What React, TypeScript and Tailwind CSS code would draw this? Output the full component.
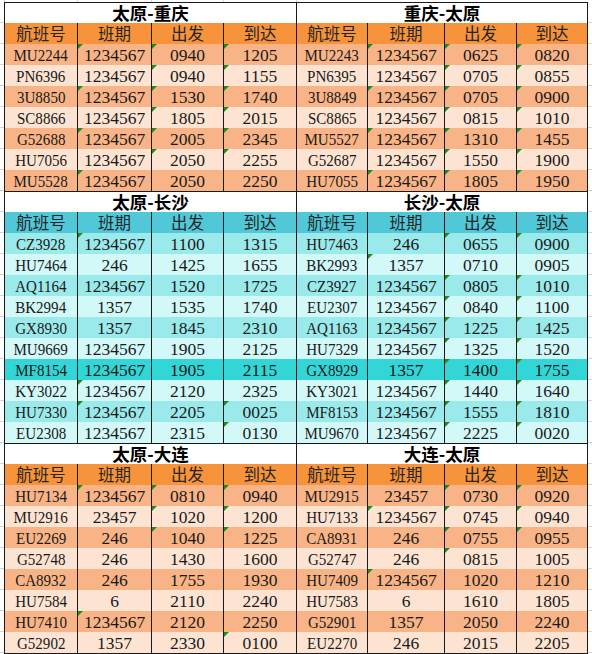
import React from "react";

type Row = { f: string; p: string; d: string; a: string; hl?: boolean; t?: string };
type Section = {
  theme: "o" | "c";
  leftTitle: string;
  rightTitle: string;
  left: Row[];
  right: Row[];
};

const r = (f: string, p: string, d: string, a: string, t = "0000", hl = false): Row => ({ f, p, d, a, t, hl });

const sections: Section[] = [
  {
    theme: "o",
    leftTitle: "太原-重庆",
    rightTitle: "重庆-太原",
    left: [
      r("MU2244", "1234567", "0940", "1205", "0111"),
      r("PN6396", "1234567", "0940", "1155", "0011"),
      r("3U8850", "1234567", "1530", "1740", "0111"),
      r("SC8866", "1234567", "1805", "2015", "0011"),
      r("G52688", "1234567", "2005", "2345", "0111"),
      r("HU7056", "1234567", "2050", "2255", "0011"),
      r("MU5528", "1234567", "2050", "2250", "0100"),
    ],
    right: [
      r("MU2243", "1234567", "0625", "0820", "0111"),
      r("PN6395", "1234567", "0705", "0855", "0011"),
      r("3U8849", "1234567", "0705", "0900", "0111"),
      r("SC8865", "1234567", "0815", "1010", "0011"),
      r("MU5527", "1234567", "1310", "1455", "0111"),
      r("G52687", "1234567", "1550", "1900", "0011"),
      r("HU7055", "1234567", "1805", "1950", "0111"),
    ],
  },
  {
    theme: "c",
    leftTitle: "太原-长沙",
    rightTitle: "长沙-太原",
    left: [
      r("CZ3928", "1234567", "1100", "1315", "0100"),
      r("HU7464", "246", "1425", "1655"),
      r("AQ1164", "1234567", "1520", "1725"),
      r("BK2994", "1357", "1535", "1740"),
      r("GX8930", "1357", "1845", "2310"),
      r("MU9669", "1234567", "1905", "2125"),
      r("MF8154", "1234567", "1905", "2115", "0000", true),
      r("KY3022", "1234567", "2120", "2325", "0100"),
      r("HU7330", "1234567", "2205", "0025", "0101"),
      r("EU2308", "1234567", "2315", "0130", "0001"),
    ],
    right: [
      r("HU7463", "246", "0655", "0900", "0011"),
      r("BK2993", "1357", "0710", "0905", "0100"),
      r("CZ3927", "1234567", "0805", "1010", "0011"),
      r("EU2307", "1234567", "0840", "1100", "0011"),
      r("AQ1163", "1234567", "1225", "1425", "0011"),
      r("HU7329", "1234567", "1325", "1520", "0011"),
      r("GX8929", "1357", "1400", "1755", "0011", true),
      r("KY3021", "1234567", "1440", "1640", "0011"),
      r("MF8153", "1234567", "1555", "1810", "0011"),
      r("MU9670", "1234567", "2225", "0020", "0011"),
    ],
  },
  {
    theme: "o",
    leftTitle: "太原-大连",
    rightTitle: "大连-太原",
    left: [
      r("HU7134", "1234567", "0810", "0940", "0111"),
      r("MU2916", "23457", "1020", "1200", "0011"),
      r("EU2269", "246", "1040", "1225", "0011"),
      r("G52748", "246", "1430", "1600"),
      r("CA8932", "246", "1755", "1930"),
      r("HU7584", "6", "2110", "2240"),
      r("HU7410", "1234567", "2120", "2250", "0100"),
      r("G52902", "1357", "2330", "0100", "0001"),
    ],
    right: [
      r("MU2915", "23457", "0730", "0920", "0011"),
      r("HU7133", "1234567", "0745", "0940", "0111"),
      r("CA8931", "246", "0755", "0955", "0011"),
      r("G52747", "246", "0815", "1005", "0010"),
      r("HU7409", "1234567", "1020", "1210", "0100"),
      r("HU7583", "6", "1610", "1805"),
      r("G52901", "1357", "2050", "2240"),
      r("EU2270", "246", "2015", "2205"),
    ],
  },
];

const leftW = ["w-[74px] border-l", "w-[74px]", "w-[72px]", "w-[73px]"];
const rightW = ["w-[71px]", "w-[77px]", "w-[72px]", "w-[71px]"];

const bgFor = (theme: "o" | "c", i: number, hl?: boolean) => {
  if (theme === "o") return i % 2 === 0 ? "bg-[#f8b486]" : "bg-[#fde4d2]";
  if (hl) return "bg-[#33d6d6]";
  return i % 2 === 0 ? "bg-[#9aeaeb]" : "bg-[#d2f8f8]";
};

function Strip() {
  return <div className="w-[4px] h-full shrink-0 border-b border-[#d4d4d4] bg-white" />;
}

function Tri() {
  return (
    <span className="absolute top-0 left-0 w-0 h-0 border-t-[5px] border-r-[5px] border-t-[#1f8a1f] border-r-transparent" />
  );
}

function DataCell({ w, bg, text, tri, code }: { w: string; bg: string; text: string; tri: boolean; code: boolean }) {
  return (
    <div className={`relative ${w} h-full shrink-0 border-r border-[#1a1a1a] ${bg} flex items-center justify-center`}>
      {tri && <Tri />}
      <span
        className={`inline-block whitespace-nowrap font-['Liberation_Serif',serif] text-[17.5px] leading-[17px] text-[#1a1a1a] pt-[1px] ${
          code ? "scale-x-[0.86]" : ""
        }`}
      >
        {text}
      </span>
    </div>
  );
}

function HeadCell({ w, bg, text }: { w: string; bg: string; text: string }) {
  return (
    <div className={`${w} h-full shrink-0 border-r border-[#1a1a1a] ${bg} flex items-center justify-center`}>
      <span className="font-['Noto_Sans_CJK_SC',sans-serif] text-[16.5px] leading-[17px] text-[#262626]">{text}</span>
    </div>
  );
}

function TitleRow({ l, rt }: { l: string; rt: string }) {
  return (
    <div className="flex h-[21px]">
      <Strip />
      <div className="w-[293px] h-full shrink-0 border-l border-r border-t border-[#1a1a1a] bg-white flex items-center justify-center">
        <span className="font-['Noto_Sans_CJK_SC',sans-serif] font-bold text-[17.5px] leading-[18px] text-black">{l}</span>
      </div>
      <div className="w-[291px] h-full shrink-0 border-r border-t border-[#1a1a1a] bg-white flex items-center justify-center">
        <span className="font-['Noto_Sans_CJK_SC',sans-serif] font-bold text-[17.5px] leading-[18px] text-black">{rt}</span>
      </div>
      <Strip />
    </div>
  );
}

function HeaderRow({ theme }: { theme: "o" | "c" }) {
  const bg = theme === "o" ? "bg-[#f7933a]" : "bg-[#50c8d8]";
  const labels = ["航班号", "班期", "出发", "到达"];
  return (
    <div className="flex h-[21px]">
      <Strip />
      {labels.map((t, i) => (
        <HeadCell key={"l" + i} w={leftW[i]} bg={bg} text={t} />
      ))}
      {labels.map((t, i) => (
        <HeadCell key={"r" + i} w={rightW[i]} bg={bg} text={t} />
      ))}
      <Strip />
    </div>
  );
}

function DataRow({ theme, i, lr, rr }: { theme: "o" | "c"; i: number; lr: Row; rr: Row }) {
  const lbg = bgFor(theme, i, lr.hl);
  const rbg = bgFor(theme, i, rr.hl);
  const lv = [lr.f, lr.p, lr.d, lr.a];
  const rv = [rr.f, rr.p, rr.d, rr.a];
  return (
    <div className="flex h-[21px]">
      <Strip />
      {lv.map((t, k) => (
        <DataCell key={"l" + k} w={leftW[k]} bg={lbg} text={t} code={k === 0} tri={(lr.t || "0000")[k] === "1"} />
      ))}
      {rv.map((t, k) => (
        <DataCell key={"r" + k} w={rightW[k]} bg={rbg} text={t} code={k === 0} tri={(rr.t || "0000")[k] === "1"} />
      ))}
      <Strip />
    </div>
  );
}

export default function App() {
  return (
    <div className="w-[592px] h-[654px] bg-white overflow-hidden flex flex-col">
      <div className="h-[2px] shrink-0 flex">
        <div className="w-[4px]" />
        <div className="w-[74px] border-l border-r border-[#d4d4d4]" />
        <div className="w-[74px] border-r border-[#d4d4d4]" />
        <div className="w-[72px] border-r border-[#d4d4d4]" />
        <div className="w-[73px] border-r border-[#d4d4d4]" />
      </div>
      {sections.map((s, si) => (
        <React.Fragment key={si}>
          <TitleRow l={s.leftTitle} rt={s.rightTitle} />
          <HeaderRow theme={s.theme} />
          {s.left.map((lr, i) => (
            <DataRow key={i} theme={s.theme} i={i} lr={lr} rr={s.right[i]} />
          ))}
        </React.Fragment>
      ))}
      <div className="flex h-[1px] shrink-0">
        <div className="w-[4px]" />
        <div className="w-[584px] bg-[#1a1a1a]" />
      </div>
    </div>
  );
}
